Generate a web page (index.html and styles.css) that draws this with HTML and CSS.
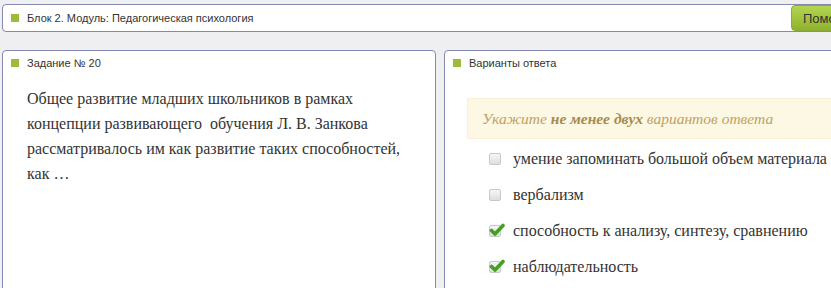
FILE: index.html
```html
<!DOCTYPE html>
<html>
<head>
	<title>Тестирование</title>
	<link rel="stylesheet" href="styles.css">
</head>
<body>
	<div class="page">
		<div class="top-bar">
			<div class="caption"><span class="marker"></span>Блок 2. Модуль: Педагогическая психология</div>
			<button class="help">Помощь</button>
		</div>

		<div class="columns">
			<div class="panel question">
				<div class="caption"><span class="marker"></span>Задание № 20</div>
				<p class="question-text">Общее развитие младших школьников в рамках концепции развивающего&nbsp; обучения Л. В. Занкова рассматривалось им как развитие таких способностей, как …</p>
			</div>

			<div class="panel answers">
				<div class="caption"><span class="marker"></span>Варианты ответа</div>
				<div class="alert">Укажите <b>не менее двух</b> вариантов ответа</div>
				<ul class="options">
					<li><span class="box"></span>умение запоминать большой объем материала</li>
					<li><span class="box"></span>вербализм</li>
					<li><span class="box checked"><svg viewBox="0 0 16 14" width="16" height="14"><path d="M2.5 7.5 L6 11 L14 2.5" fill="none" stroke="#45a022" stroke-width="3.6" stroke-linecap="round" stroke-linejoin="round"/></svg></span>способность к анализу, синтезу, сравнению</li>
					<li><span class="box checked"><svg viewBox="0 0 16 14" width="16" height="14"><path d="M2.5 7.5 L6 11 L14 2.5" fill="none" stroke="#45a022" stroke-width="3.6" stroke-linecap="round" stroke-linejoin="round"/></svg></span>наблюдательность</li>
				</ul>
			</div>
		</div>
	</div>
</body>
</html>
```

FILE: styles.css
```css
body {
	margin: 0;
	background-color: #efeff2;
	overflow: hidden;
	font-family: 'Liberation Sans', Arial, sans-serif;
	color: #333;
}

.page {
	width: 900px;
	padding: 4px 0 0 2px;
}

.top-bar {
	display: flex;
	align-items: center;
	width: 866px;
	height: 26px;
	background-color: #fff;
	border: 1px solid #8489b0;
	border-radius: 4px;
	padding-right: 2px;
}

.caption {
	display: flex;
	align-items: center;
	font-size: 11px;
	color: #333;
	padding-left: 8px;
	flex: 1;
}

.marker {
	display: inline-block;
	width: 8px;
	height: 8px;
	background-color: #9cbb39;
	margin-right: 8px;
}

.help {
	width: 78px;
	height: 26px;
	font-family: 'Liberation Sans', Arial, sans-serif;
	font-size: 13px;
	color: #333;
	text-align: left;
	padding: 0 0 0 11px;
	border: 1px solid #8ea83a;
	border-radius: 4px;
	background: linear-gradient(#b4d54f, #8fb22c);
}

.columns {
	display: flex;
	gap: 8px;
	margin-top: 18px;
}

.panel {
	background-color: #fff;
	border: 1px solid #8489b0;
	border-radius: 4px;
	height: 260px;
	padding-top: 7px;
}

.question {
	width: 432px;
}

.answers {
	width: 440px;
}

.panel .caption {
	height: 10px;
}

.question-text {
	font-family: "Liberation Serif", "Times New Roman", serif;
	font-size: 16px;
	line-height: 25px;
	margin: 18px 0 0 0;
	padding: 0 28px 0 24px;
}

.alert {
	margin: 30px 0 0 22px;
	padding: 0 14px;
	height: 39px;
	line-height: 39px;
	background-color: #fcf8e3;
	border: 1px solid #fbf0d8;
	border-right: none;
	font-family: "Liberation Serif", "Times New Roman", serif;
	font-size: 15.5px;
	font-style: italic;
	color: #bfa065;
}

.alert b {
	color: #a8884f;
}

.options {
	list-style: none;
	margin: 2px 0 0 0;
	padding: 0 0 0 44px;
}

.options li {
	display: flex;
	align-items: center;
	height: 36px;
	font-family: "Liberation Serif", "Times New Roman", serif;
	font-size: 16px;
	color: #333;
	white-space: nowrap;
}

.box {
	position: relative;
	width: 10px;
	height: 10px;
	border: 1px solid #c8c8c8;
	border-radius: 2px;
	background: linear-gradient(#f6f6f6, #dedede);
	margin-right: 12px;
	flex-shrink: 0;
}

.box svg {
	position: absolute;
	left: -1px;
	top: -3px;
}
```
